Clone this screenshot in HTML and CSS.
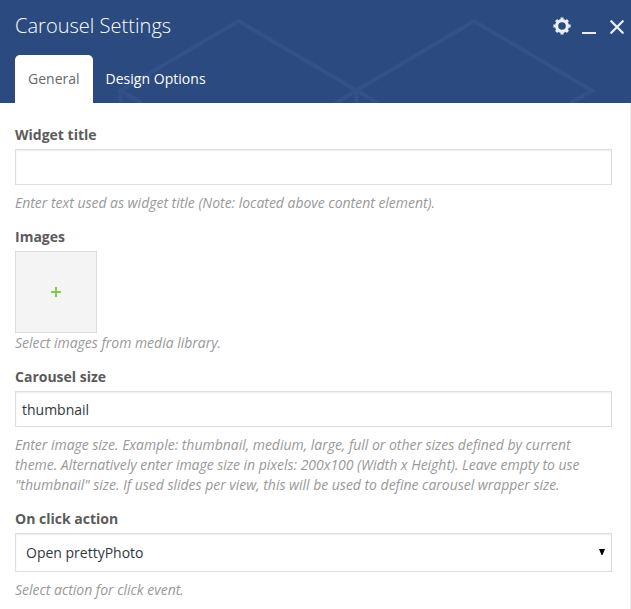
FILE: index.html
```html
<!DOCTYPE html>
<html lang="en">
<head>
<meta charset="utf-8">
<title>Carousel Settings</title>
<link rel="stylesheet" href="styles.css">
</head>
<body>
<div class="panel">
  <header class="header">
    <svg class="pattern" width="631" height="103" viewBox="0 0 631 103" fill="none" stroke="#325287" stroke-width="4">
      <path d="M142 103.500L120.500 90.500L238.500 21L356.500 90.500L378 103.500M335 103.500L356.500 90.500L474 21L592 90.500L570 103.500M120.500 90.500V104M356.500 90.500V104"/>
    </svg>
    <div class="title-row">
      <h1 class="title">Carousel Settings</h1>
      <div class="controls">
        <svg class="gear" width="18" height="18" viewBox="0 0 18 18">
          <circle cx="9" cy="9" r="5.400" fill="none" stroke="#ebeef6" stroke-width="3.200"/>
          <path d="M9 0.400V3M9 15V17.600M0.400 9H3M15 9H17.600M3.100 3.100L4.500 4.500M13.500 13.500L14.900 14.900M3.100 14.900L4.500 13.500M13.500 4.500L14.900 3.100" stroke="#ebeef6" stroke-width="3"/>
        </svg>
        <span class="minimize"></span>
        <svg class="close" width="14" height="14" viewBox="0 0 14 14">
          <path d="M1.300 1.300L12.700 12.700M12.700 1.300L1.300 12.700" stroke="#ebeef6" stroke-width="2.300" stroke-linecap="round"/>
        </svg>
      </div>
    </div>
    <nav class="tabs">
      <a class="tab active">General</a>
      <a class="tab">Design Options</a>
    </nav>
  </header>
  <main class="form">
    <section class="group">
      <div class="label">Widget title</div>
      <div class="field"></div>
      <p class="description">Enter text used as widget title (Note: located above content element).</p>
    </section>
    <section class="group">
      <div class="label">Images</div>
      <div class="add-image">
        <svg width="10" height="10" viewBox="0 0 10 10"><path d="M5 0V10M0 5H10" stroke="#84cc48" stroke-width="2"/></svg>
      </div>
      <p class="description flush">Select images from media library.</p>
    </section>
    <section class="group">
      <div class="label">Carousel size</div>
      <div class="field">thumbnail</div>
      <p class="description">Enter image size. Example: thumbnail, medium, large, full or other sizes defined by current<br>theme. Alternatively enter image size in pixels: 200x100 (Width x Height). Leave empty to use<br>"thumbnail" size. If used slides per view, this will be used to define carousel wrapper size.</p>
    </section>
    <section class="group">
      <div class="label">On click action</div>
      <div class="field select">Open prettyPhoto
        <svg class="arrow" width="6" height="6" viewBox="0 0 6 6"><path d="M0 0H6L3.500 6H2.500Z" fill="#000"/></svg>
      </div>
      <p class="description">Select action for click event.</p>
    </section>
  </main>
</div>
</body>
</html>
```

FILE: styles.css
```css
* {
  box-sizing: border-box;
}

body {
  margin: 0;
  background: #fff;
  font: 14px/20px "Open Sans", sans-serif;
  overflow: hidden;
}

.panel {
  height: 609px;
}

.header {
  position: relative;
  height: 103px;
  background: #2b4b80;
  color: #fff;
  display: flex;
  flex-direction: column;
  justify-content: space-between;
}

.pattern {
  position: absolute;
  inset: 0;
}

.title-row {
  position: relative;
  display: flex;
  justify-content: space-between;
  padding: 12px 7px 0 15px;
}

.title {
  margin: 0;
  font-size: 20px;
  line-height: 28px;
  font-weight: 300;
  letter-spacing: .03px;
}

.controls {
  display: flex;
  align-items: flex-start;
  padding-top: 5px;
}

.minimize {
  width: 14px;
  height: 2px;
  margin: 15px 14px 0 11px;
  background: #ebeef6;
}

.close {
  margin-top: 3px;
}

.tabs {
  position: relative;
  display: flex;
  height: 48px;
  padding-left: 15px;
}

.tab {
  padding: 14px 12.5px;
  letter-spacing: .03px;
}

.active {
  width: 78px;
  padding: 14px 13px;
  background: #fff;
  color: #686868;
  letter-spacing: 0;
  border-radius: 5px 5px 0 0;
}

.form {
  height: 506px;
  padding: 22px 18px 0 15px;
  border-right: 1px solid #f0f0f0;
}

.group {
  margin-bottom: 14px;
}

.label {
  margin-bottom: 4px;
  color: #5b5b5b;
  font-weight: 700;
}

.field {
  height: 36px;
  padding: 8px 6px;
  border: 1px solid #ddd;
  box-shadow: inset 0 1px 2px rgba(0, 0, 0, .07);
  color: #32373c;
}

.select {
  display: flex;
  align-items: center;
  justify-content: space-between;
  height: 39px;
  padding: 0 6px 0 10px;
}

.arrow {
  margin-bottom: 2px;
}

.add-image {
  display: flex;
  align-items: center;
  justify-content: center;
  width: 82px;
  height: 82px;
  border: 1px solid #ddd;
  background: #f4f4f4;
}

.description {
  margin: 8px 0 0;
  color: #999;
  font-style: italic;
  letter-spacing: -.02px;
  white-space: nowrap;
}

.flush {
  margin-top: 0;
}
```
